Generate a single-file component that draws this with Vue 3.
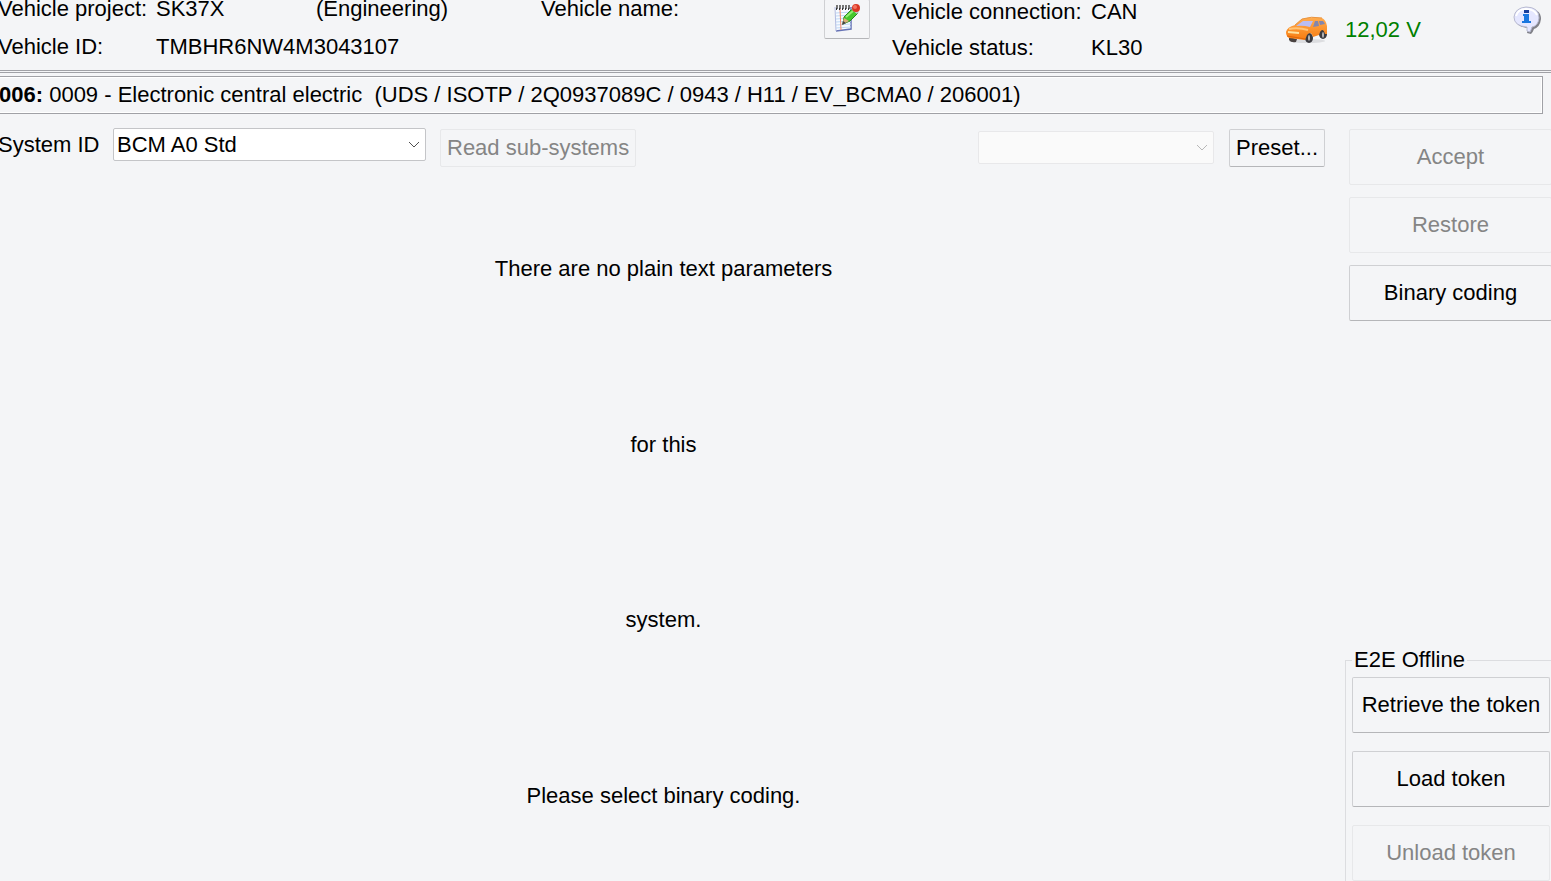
<script setup>
import { ref } from "vue";

const systemId = ref("BCM A0 Std");
const preset = ref("");
const messages = [
  "There are no plain text parameters",
  "for this",
  "system.",
  "Please select binary coding.",
];
</script>

<template>
  <div class="page">
    <header class="vehicle">
      <dl class="project">
        <dt>Vehicle project:</dt>
        <dd>SK37X</dd>
        <dd>(Engineering)</dd>
        <dt>Vehicle name:</dt>
        <dt>Vehicle ID:</dt>
        <dd class="wide">TMBHR6NW4M3043107</dd>
      </dl>
      <button class="note" aria-label="Edit notes">
        <svg width="28" height="30" viewBox="0 0 28 30">
          <path d="M2 4L18 3L18 26L3 28Z" fill="#f7faff" />
          <path d="M18 4L18 26L3 28" fill="none" stroke="#6673b5" stroke-width="1.500" />
          <path d="M2 4L3 28" stroke="#b3bce0" />
          <path d="M3 10L18 9M3 13L18 12M3 16L18 15M3 19L18 18M3 22L18 21M3 25L18 24" stroke="#bfd8f5" />
          <path d="M7 6L8 27" stroke="#f58468" />
          <path d="M3 4H17" stroke="#777" stroke-width="4" stroke-dasharray="2 1" />
          <path d="M3 6H17" stroke="#333" stroke-width="2" stroke-dasharray="1 2" />
          <path d="M10 21L11 14L19 6L25 10L17 18Z" fill="#45c62c" stroke="#278520" />
          <path d="M13 14L20 8" stroke="#92ec70" stroke-width="2" />
          <path d="M9 22L11 15L16 18Z" fill="#d8ae78" />
          <path d="M9 22L10 18L13 20Z" fill="#444" />
          <path d="M18 6L20 4L26 9L24 11Z" fill="#bfc9c8" />
          <circle cx="23" cy="5" r="4" fill="#d93624" />
          <circle cx="22" cy="4" r="2" fill="#f47360" />
        </svg>
      </button>
      <dl class="connection">
        <dt>Vehicle connection:</dt>
        <dd>CAN</dd>
        <dt>Vehicle status:</dt>
        <dd>KL30</dd>
      </dl>
      <div class="power">
        <svg width="44" height="30" viewBox="0 0 44 30">
          <defs>
            <linearGradient id="paint" x1="0" y1="0" x2="0" y2="1">
              <stop offset="0" stop-color="#ffad50" />
              <stop offset="1" stop-color="#f87c10" />
            </linearGradient>
          </defs>
          <ellipse cx="22" cy="26" rx="18" ry="2" fill="#dcdde0" />
          <path d="M4 22L12 24L11 27Q6 28 4 25Z" fill="#4a4341" />
          <ellipse cx="38" cy="19" rx="4" ry="5" fill="#3b3b40" />
          <ellipse cx="24" cy="23" rx="4" ry="5" fill="#3b3b40" />
          <path d="M1 17Q2 12 10 10L17 4Q26 1 37 3Q41 5 42 11L42 19L40 19Q38 12 35 17L34 20L28 22Q26 15 22 20L20 25L4 23Q1 21 1 17Z" fill="url(#paint)" />
          <path d="M10 10L17 4Q26 1 37 3" fill="none" stroke="#e99440" />
          <path d="M11 11L18 6L28 6L25 12Q18 10 11 11Z" fill="#b9bdf3" />
          <path d="M28 12L30 6L33 6L34 11ZM35 10L34 6L38 6L40 9Z" fill="#8286ae" />
          <path d="M4 14Q13 12 23 15" fill="none" stroke="#ffc478" stroke-width="2" />
          <path d="M3 17L14 18" stroke="#ffe3a0" stroke-width="2" />
          <path d="M2 21L20 24" stroke="#df6508" />
          <ellipse cx="38" cy="20" rx="1" ry="3" fill="#bbb" />
          <ellipse cx="24" cy="23" rx="1" ry="3" fill="#bbb" />
        </svg>
        <output class="voltage">12,02 V</output>
      </div>
      <button class="info" aria-label="Information">
        <svg width="30" height="30" viewBox="0 0 30 30">
          <path d="M16 3Q29 4 29 14Q28 22 22 24Q21 27 19 29L15 28L16 23Q4 22 3 14Z" fill="#808188" />
          <path d="M14 2Q27 2 27 13Q26 21 20 22Q19 25 18 27L15 26L15 22Q2 21 2 12Q3 3 14 2Z" fill="#e5e7ff" stroke="#b8bad0" />
          <path d="M4 11Q6 4 14 4Q22 4 25 10" fill="none" stroke="#fff" stroke-width="2" />
          <rect x="12" y="5" width="5" height="3" fill="#173f9b" />
          <path d="M11 9H17V16H19V18H10V16H12V11H11Z" fill="#1976df" />
        </svg>
      </button>
    </header>

    <h1 class="unit"><b>006:</b> 0009 - Electronic central electric&nbsp; (UDS / ISOTP / 2Q0937089C / 0943 / H11 / EV_BCMA0 / 206001)</h1>

    <div class="body">
      <main class="content">
        <div class="toolbar">
          <label for="system">System ID</label>
          <div class="combo system">
            <select id="system" v-model="systemId">
              <option>BCM A0 Std</option>
            </select>
            <svg class="arrow" width="12" height="8" viewBox="0 0 12 8"><path d="M1 1L6 6L11 1" /></svg>
          </div>
          <button class="btn small" disabled>Read sub-systems</button>
          <div class="combo preset">
            <select v-model="preset" aria-label="Preset" disabled>
              <option value=""></option>
            </select>
            <svg class="arrow" width="12" height="8" viewBox="0 0 12 8"><path d="M1 1L6 6L11 1" /></svg>
          </div>
          <button class="btn small">Preset...</button>
        </div>
        <div class="messages">
          <p v-for="line in messages" :key="line">{{ line }}</p>
        </div>
      </main>

      <aside class="side">
        <div class="actions">
          <button class="btn" disabled>Accept</button>
          <button class="btn" disabled>Restore</button>
          <button class="btn">Binary coding</button>
        </div>
        <fieldset class="token">
          <legend>E2E Offline</legend>
          <button class="btn">Retrieve the token</button>
          <button class="btn">Load token</button>
          <button class="btn" disabled>Unload token</button>
        </fieldset>
      </aside>
    </div>
  </div>
</template>

<style>
body {
  background: #f4f5f7;
  overflow: hidden;
}
</style>

<style scoped>
* {
  box-sizing: border-box;
  margin: 0;
  padding: 0;
}

.page {
  display: flex;
  flex-direction: column;
  height: 100vh;
  overflow: hidden;
  background: #f4f5f7;
  color: #000;
  font: 22px/26px "Liberation Sans", Arial, sans-serif;
}

button,
select {
  font: inherit;
  color: inherit;
}

.vehicle {
  display: flex;
  align-items: flex-start;
  height: 73px;
  margin-left: -2px;
  border-bottom: 3px double #a0a1a6;
}

.project {
  display: grid;
  grid-template-columns: 158px 160px 225px 1fr;
  row-gap: 12px;
  width: 826px;
  margin-top: -4px;
}

.wide {
  grid-column: span 3;
}

.note {
  display: flex;
  justify-content: center;
  width: 46px;
  height: 40px;
  margin-top: -1px;
  padding-top: 3px;
  background: none;
  border: 1px solid #cfd0d3;
  border-bottom-color: #b5b6b9;
  border-radius: 2px;
}

.connection {
  display: grid;
  grid-template-columns: 199px 1fr;
  row-gap: 10px;
  width: 393px;
  margin: -1px 0 0 22px;
}

.power {
  display: flex;
  align-items: center;
  gap: 16px;
  margin-top: 15px;
}

.voltage {
  color: #008000;
}

.info {
  margin: 5px 9px 0 auto;
  background: none;
  border: 0;
}

.info svg {
  display: block;
}

.unit {
  margin: 3px 8px 0 -2px;
  padding: 5px 0;
  font-size: 22px;
  font-weight: normal;
  border: 1px solid #a0a1a6;
  box-shadow: inset 0 0 0 1px #fff;
}

.body {
  display: flex;
  flex: 1;
  min-height: 0;
  padding-top: 14px;
}

.content {
  display: flex;
  flex: 1;
  flex-direction: column;
}

.toolbar {
  display: flex;
  align-items: flex-start;
  height: 53px;
  padding-right: 20px;
}

.toolbar label {
  width: 115px;
  margin: 4px 0 0 -2px;
}

.combo {
  position: relative;
}

.combo select {
  display: block;
  width: 100%;
  height: 33px;
  padding: 0 24px 0 3px;
  appearance: none;
  background: #fff;
  border: 1px solid #c4c5c8;
  border-radius: 2px;
}

.combo select:disabled {
  background: #fafafa;
  border-color: #e8e8ea;
  opacity: 1;
}

.arrow {
  position: absolute;
  top: 13px;
  right: 6px;
  fill: none;
  stroke: #505050;
  pointer-events: none;
}

.preset .arrow {
  stroke: #b8b8b8;
}

.system {
  width: 313px;
  margin-right: 14px;
}

.preset {
  width: 236px;
  margin: 3px 15px 0 auto;
}

.btn {
  height: 56px;
  background: #f4f5f7;
  border: 1px solid #cfd0d3;
  border-bottom-color: #b5b6b9;
  border-radius: 2px;
  white-space: nowrap;
}

.btn:disabled {
  color: #858585;
  border-color: #e7e8ea;
}

.small {
  height: 38px;
  margin-top: 1px;
  padding: 0 6px;
}

.messages {
  display: grid;
  flex: 1;
  grid-auto-rows: 1fr;
  align-items: center;
  margin-bottom: -3px;
  padding-right: 18px;
  text-align: center;
}

.side {
  display: flex;
  flex-direction: column;
  justify-content: space-between;
  width: 206px;
}

.actions {
  display: grid;
  gap: 12px;
  margin: 1px -1px 0 4px;
}

.token {
  display: grid;
  gap: 18px;
  margin-right: -1px;
  padding: 4px 2px 0 6px;
  border: 1px solid #dcdde0;
  border-width: 1px 0 0 1px;
}

.token legend {
  padding: 0 2px;
}
</style>
